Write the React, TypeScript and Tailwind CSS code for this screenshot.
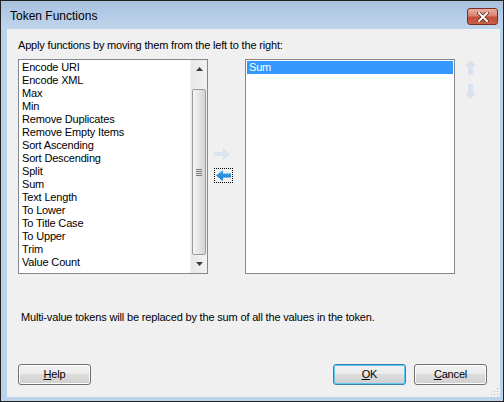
import React from "react";

// Token Functions dialog (Windows 7 basic look)

const functions = [
  "Encode URI",
  "Encode XML",
  "Max",
  "Min",
  "Remove Duplicates",
  "Remove Empty Items",
  "Sort Ascending",
  "Sort Descending",
  "Split",
  "Sum",
  "Text Length",
  "To Lower",
  "To Title Case",
  "To Upper",
  "Trim",
  "Value Count",
];

function ArrowRight() {
  return (
    <svg width="17" height="12" viewBox="0 0 17 12">
      <polygon points="0,4 9,4 9,0 16,6 9,12 9,8 0,8" fill="#dbe4ee" />
    </svg>
  );
}

function ArrowLeft() {
  return (
    <svg width="15" height="11" viewBox="0 0 15 11">
      <defs>
        <linearGradient id="blueArrow" x1="0" y1="0" x2="0" y2="1">
          <stop offset="0" stopColor="#4fb0ec" />
          <stop offset="1" stopColor="#0f72c2" />
        </linearGradient>
      </defs>
      <polygon points="15,3.5 7,3.5 7,0 0,5.5 7,11 7,7.5 15,7.5" fill="url(#blueArrow)" />
    </svg>
  );
}

function ArrowUp({ down }: { down?: boolean }) {
  return (
    <svg width="11" height="15" viewBox="0 0 11 15" className={down ? "rotate-180" : ""}>
      <polygon points="5.5,0 11,6 8,6 8,15 3,15 3,6 0,6" fill="#d9e3ed" />
    </svg>
  );
}

function Scrollbar() {
  return (
    <div className="w-[17px] h-full flex flex-col bg-gradient-to-r from-[#e8e8e8] to-[#f2f2f2] border-l border-[#f0f0f0]">
      <div className="h-[17px] flex items-center justify-center">
        <svg width="7" height="4" viewBox="0 0 7 4">
          <polygon points="3.5,0 7,4 0,4" fill="#3d3d3d" />
        </svg>
      </div>
      <div className="h-[12px]" />
      <div className="h-[166px] mx-px rounded-[2px] border border-[#9b9b9b] bg-gradient-to-r from-[#f4f4f4] via-[#e6e6e6] to-[#d3d3d3] flex items-center justify-center">
        <div className="flex flex-col gap-px">
          <div className="w-[6px] h-px bg-[#7a7a7a]" />
          <div className="w-[6px] h-px bg-[#7a7a7a]" />
          <div className="w-[6px] h-px bg-[#7a7a7a]" />
          <div className="w-[6px] h-px bg-[#7a7a7a]" />
        </div>
      </div>
      <div className="flex-1 flex items-center justify-center">
        <svg width="7" height="4" viewBox="0 0 7 4">
          <polygon points="0,0 7,0 3.5,4" fill="#3d3d3d" />
        </svg>
      </div>
    </div>
  );
}

function WinButton({ label, hot, isDefault }: { label: string; hot: string; isDefault?: boolean }) {
  const rest = label.slice(1);
  return (
    <button
      className={
        "w-[73px] h-[21px] rounded-[3px] border text-[11px] leading-[13px] text-black bg-[linear-gradient(#f2f2f2_0%,#ebebeb_50%,#dddddd_50%,#cfcfcf_100%)] " +
        (isDefault
          ? "border-[#3c7fb1] shadow-[inset_0_0_0_1px_#5ec8f2]"
          : "border-[#707070] shadow-[inset_0_0_0_1px_#fcfcfc]")
      }
    >
      <span className="underline underline-offset-[1px]">{hot}</span>
      {rest}
    </button>
  );
}

export default function App() {
  return (
    <div className="w-[504px] h-[402px] border border-[#222] bg-[#bcd2ea] flex flex-col font-['Liberation_Sans',Arial,sans-serif] text-black select-none">
      {/* title bar */}
      <div className="h-[28px] flex items-start pl-[9px] pr-[5px] bg-gradient-to-b from-[#a8c2df] to-[#c0d5ec]">
        <span className="mt-[7px] text-[12px] leading-[16px] text-black">Token Functions</span>
        <div className="ml-auto mt-[7px] w-[31px] h-[17px] rounded-[3px] border border-[#7a2d22] bg-[linear-gradient(#eab0a2_0%,#d9826f_45%,#c44f38_55%,#c9604a_100%)] flex items-center justify-center">
          <svg width="12" height="10" viewBox="0 0 12 10">
            <path d="M2 1 L10 9 M10 1 L2 9" stroke="#5a2a22" strokeWidth="3.6" strokeLinecap="square" />
            <path d="M2 1 L10 9 M10 1 L2 9" stroke="#ffffff" strokeWidth="2" strokeLinecap="square" />
          </svg>
        </div>
      </div>

      {/* client area */}
      <div className="flex-1 ml-[6px] mr-[3px] mb-[4px] bg-[#f0f0f0] flex flex-col pl-[11px] pr-[13px] text-[11px] leading-[13px] tracking-[-0.17px]">
        <p className="mt-[10px]">Apply functions by moving them from the left to the right:</p>

        <div className="mt-[7px] flex items-start">
          {/* source list */}
          <div className="w-[190px] h-[215px] border border-[#828790] bg-white flex">
            <ul className="flex-1 pt-px pl-[3px]">
              {functions.map((f) => (
                <li key={f} className="h-[13px] whitespace-nowrap">
                  {f}
                </li>
              ))}
            </ul>
            <Scrollbar />
          </div>

          {/* move buttons */}
          <div className="ml-[6px] w-[19px] flex flex-col items-start pt-[89px]">
            <ArrowRight />
            <div className="mt-[8px] w-[19px] h-[15px] border border-dotted border-black flex items-center justify-center">
              <ArrowLeft />
            </div>
          </div>

          {/* target list */}
          <div className="ml-[12px] w-[210px] h-[215px] border border-[#828790] bg-white p-px">
            <div className="h-[13px] bg-[#3399ff] text-white pl-[2px]">Sum</div>
          </div>

          {/* order buttons */}
          <div className="ml-[10px] flex flex-col pt-px gap-[9px]">
            <ArrowUp />
            <ArrowUp down />
          </div>
        </div>

        <p className="mt-[37px] pl-[3px]">Multi-value tokens will be replaced by the sum of all the values in the token.</p>

        <div className="mt-[40px] flex items-start">
          <WinButton label="Help" hot="H" />
          <div className="ml-auto flex gap-[8px]">
            <WinButton label="OK" hot="O" isDefault />
            <WinButton label="Cancel" hot="C" />
          </div>
        </div>

        <div className="mt-auto self-end -mr-[12px] mb-px">
          <svg width="8" height="8" viewBox="0 0 8 8">
            <rect x="6" y="0" width="1" height="1" fill="#b5b5b5" />
            <rect x="3" y="3" width="1" height="1" fill="#b5b5b5" />
            <rect x="6" y="3" width="1" height="1" fill="#b5b5b5" />
            <rect x="0" y="6" width="1" height="1" fill="#b5b5b5" />
            <rect x="3" y="6" width="1" height="1" fill="#b5b5b5" />
            <rect x="6" y="6" width="1" height="1" fill="#b5b5b5" />
          </svg>
        </div>
      </div>
    </div>
  );
}
